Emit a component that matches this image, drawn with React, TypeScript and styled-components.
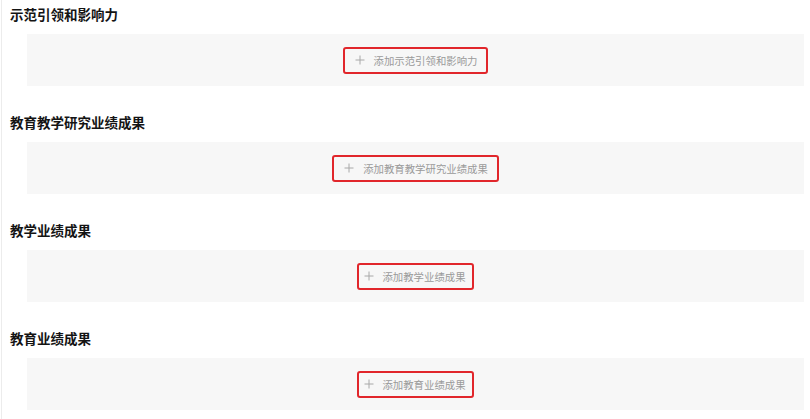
import React from "react";
import styled, { createGlobalStyle } from "styled-components";

const GlobalStyle = createGlobalStyle`
  html, body {
    margin: 0;
    padding: 0;
    background: #ffffff;
  }
  body {
    font-family: "Noto Sans CJK SC", "Noto Sans", "Liberation Sans", sans-serif;
  }
`;

interface SectionData {
  title: string;
  action: string;
  compact?: boolean;
}

const sections: SectionData[] = [
  { title: "示范引领和影响力", action: "添加示范引领和影响力" },
  { title: "教育教学研究业绩成果", action: "添加教育教学研究业绩成果" },
  { title: "教学业绩成果", action: "添加教学业绩成果", compact: true },
  { title: "教育业绩成果", action: "添加教育业绩成果", compact: true },
];

const Page = styled.div`
  width: 810px;
  height: 419px;
  box-sizing: border-box;
  padding-top: 4px;
  border-left: 1px solid #ececec;
  margin-left: 1px;
  overflow: hidden;
`;

const Section = styled.section`
  display: flex;
  flex-direction: column;
  gap: 10px;
  margin-bottom: 26px;
`;

const Title = styled.h3`
  margin: 0;
  padding-left: 8px;
  height: 20px;
  line-height: 20px;
  font-size: 13.5px;
  font-weight: 700;
  color: #141414;
`;

const Panel = styled.div`
  display: flex;
  align-items: center;
  justify-content: center;
  height: 52px;
  margin: 0 7px 0 25px;
  background: #f7f7f7;
`;

const AddButton = styled.button<{ $compact?: boolean }>`
  display: flex;
  align-items: center;
  gap: ${(p) => (p.$compact ? "8px" : "9px")};
  height: 27px;
  box-sizing: border-box;
  padding: ${(p) => (p.$compact ? "0 6px 0 5px" : "0 9px 0 10px")};
  border: 2px solid #e1262b;
  border-radius: 3px;
  background: transparent;
  font-family: inherit;
  font-size: 10.4px;
  color: #9a9a9a;
  cursor: pointer;
`;

const PlusIcon = () => (
  <svg width="10" height="10" viewBox="0 0 10 10" aria-hidden="true">
    <path d="M5 0.5v9M0.5 5h9" stroke="#a8a8a8" strokeWidth="1" fill="none" />
  </svg>
);

const App: React.FC = () => {
  return (
    <>
      <GlobalStyle />
      <Page>
        {sections.map((s) => (
          <Section key={s.title}>
            <Title>{s.title}</Title>
            <Panel>
              <AddButton $compact={s.compact}>
                <PlusIcon />
                <span>{s.action}</span>
              </AddButton>
            </Panel>
          </Section>
        ))}
      </Page>
    </>
  );
};

export default App;
